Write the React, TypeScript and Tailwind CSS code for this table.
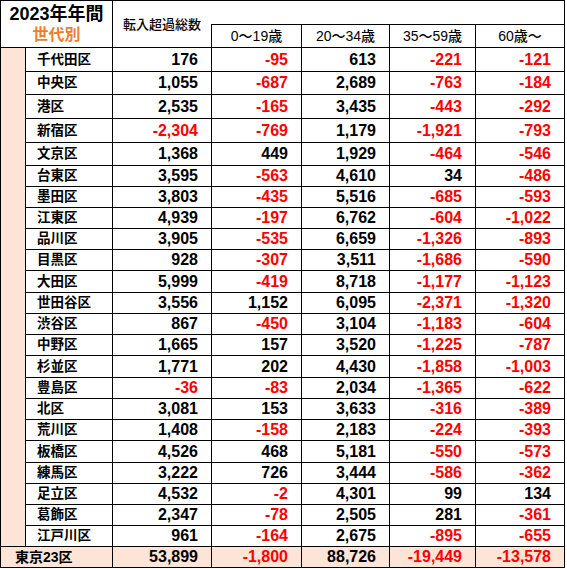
const rows: [string, string, string, string, string, string][] = [
  ["千代田区", "176", "-95", "613", "-221", "-121"],
  ["中央区", "1,055", "-687", "2,689", "-763", "-184"],
  ["港区", "2,535", "-165", "3,435", "-443", "-292"],
  ["新宿区", "-2,304", "-769", "1,179", "-1,921", "-793"],
  ["文京区", "1,368", "449", "1,929", "-464", "-546"],
  ["台東区", "3,595", "-563", "4,610", "34", "-486"],
  ["墨田区", "3,803", "-435", "5,516", "-685", "-593"],
  ["江東区", "4,939", "-197", "6,762", "-604", "-1,022"],
  ["品川区", "3,905", "-535", "6,659", "-1,326", "-893"],
  ["目黒区", "928", "-307", "3,511", "-1,686", "-590"],
  ["大田区", "5,999", "-419", "8,718", "-1,177", "-1,123"],
  ["世田谷区", "3,556", "1,152", "6,095", "-2,371", "-1,320"],
  ["渋谷区", "867", "-450", "3,104", "-1,183", "-604"],
  ["中野区", "1,665", "157", "3,520", "-1,225", "-787"],
  ["杉並区", "1,771", "202", "4,430", "-1,858", "-1,003"],
  ["豊島区", "-36", "-83", "2,034", "-1,365", "-622"],
  ["北区", "3,081", "153", "3,633", "-316", "-389"],
  ["荒川区", "1,408", "-158", "2,183", "-224", "-393"],
  ["板橋区", "4,526", "468", "5,181", "-550", "-573"],
  ["練馬区", "3,222", "726", "3,444", "-586", "-362"],
  ["足立区", "4,532", "-2", "4,301", "99", "134"],
  ["葛飾区", "2,347", "-78", "2,505", "281", "-361"],
  ["江戸川区", "961", "-164", "2,675", "-895", "-655"],
];

const total = ["53,899", "-1,800", "88,726", "-19,449", "-13,578"];

// excel rows are not all the same height
const heights = [
  "h-[24px]", "h-[23px]", "h-[24px]", "h-[24px]", "h-[23px]",
  "h-[21px]", "h-[21px]", "h-[21px]", "h-[21px]", "h-[21px]", "h-[22px]",
  "h-[21px]", "h-[21px]", "h-[21px]", "h-[22px]", "h-[21px]", "h-[21px]",
  "h-[21px]", "h-[22px]", "h-[21px]", "h-[21px]", "h-[21px]", "h-[21px]",
];

const jp = "font-['Liberation_Sans','Noto_Sans_CJK_JP',sans-serif]";

function Num({ value, pink }: { value: string; pink?: boolean }) {
  const neg = value.startsWith("-");
  return (
    <td
      className={`border border-black text-right pr-[13px] text-[16px] font-bold leading-none ${
        neg ? "text-[#ff0000]" : "text-black"
      } ${pink ? "bg-[#fce4d6]" : ""}`}
    >
      {value}
    </td>
  );
}

export default function App() {
  return (
    <div className={`bg-white w-[567px] h-[569px] ${jp}`}>
      <table className="table-fixed border-collapse w-[564px]">
        <colgroup>
          <col className="w-[25px]" />
          <col className="w-[87px]" />
          <col className="w-[99px]" />
          <col className="w-[90px]" />
          <col className="w-[88px]" />
          <col className="w-[86px]" />
          <col className="w-[89px]" />
        </colgroup>
        <tbody>
          <tr className="h-[24px]">
            <td colSpan={2} rowSpan={2} className="border border-black text-center align-middle">
              <div className="text-[18px] font-bold leading-[22px] text-black">2023年年間</div>
              <div className="text-[16px] font-bold leading-[20px] text-[#ed7d31]">世代別</div>
            </td>
            <td
              rowSpan={2}
              className="border-t border-b border-black text-center text-[13px] font-medium text-black pt-[1px]"
            >
              転入超過総数
            </td>
            <td colSpan={4} className="border-t border-r border-black"></td>
          </tr>
          <tr className="h-[23px]">
            {["0～19歳", "20～34歳", "35～59歳", "60歳～"].map((h) => (
              <td key={h} className="border border-black text-center text-[14px] font-medium text-black leading-none">
                {h}
              </td>
            ))}
          </tr>
          {rows.map((r, i) => (
            <tr key={r[0]} className={heights[i]}>
              {i === 0 && (
                <td rowSpan={rows.length} className="border border-black bg-[#fce4d6]"></td>
              )}
              <td className="border border-black pl-[11px] text-[13.5px] font-bold text-black leading-none">
                {r[0]}
              </td>
              {r.slice(1).map((v, j) => (
                <Num key={j} value={v} />
              ))}
            </tr>
          ))}
          <tr className="h-[21px]">
            <td
              colSpan={2}
              className="border border-black bg-[#fce4d6] pl-[14px] text-[14px] font-bold text-black leading-none"
            >
              東京23区
            </td>
            {total.map((v, j) => (
              <Num key={j} value={v} pink />
            ))}
          </tr>
        </tbody>
      </table>
    </div>
  );
}
